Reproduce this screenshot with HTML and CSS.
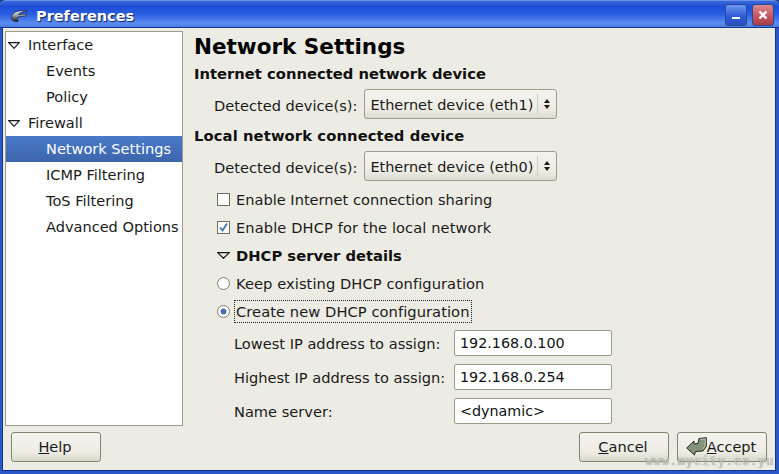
FILE: index.html
```html
<!DOCTYPE html>
<html lang="en">
<head>
  <meta charset="UTF-8">
  <title>Preferences</title>
  <link rel="stylesheet" href="styles.css">
</head>
<body>
  <div class="window">
    <div class="titlebar">
      <svg class="app-icon" viewBox="0 0 17 12">
        <defs>
          <linearGradient id="flame" x1="0" y1="0" x2="0" y2="1">
            <stop offset="0" stop-color="#f2f2f2"/>
            <stop offset="0.45" stop-color="#9a9ca4"/>
            <stop offset="1" stop-color="#15161c"/>
          </linearGradient>
        </defs>
        <path d="M0.5 8C0.5 3 6 -0.5 16.5 1 11 1.5 8.5 2.5 7.5 4.5L15.5 4 14.5 6 7 7C6 8.5 6.5 10 7 11.5 3 11.5 0.5 10.5 0.5 8Z" fill="url(#flame)" stroke="#1a1c26" stroke-width="0.6"/>
      </svg>
      <span class="title">Preferences</span>
      <div class="wm-btn minimize"><span></span></div>
      <div class="wm-btn close">
        <svg viewBox="0 0 10 10"><path d="M1.5 1.5L8.5 8.5M8.5 1.5L1.5 8.5" stroke="#fff" stroke-width="2.4"/></svg>
      </div>
    </div>

    <div class="content">
      <div class="main">
        <div class="tree">
          <div class="tree-row"><svg class="expander" viewBox="0 0 12 7"><path d="M0.7 0.7H11.3L6 6.3Z"/></svg>Interface</div>
          <div class="tree-row child">Events</div>
          <div class="tree-row child">Policy</div>
          <div class="tree-row"><svg class="expander" viewBox="0 0 12 7"><path d="M0.7 0.7H11.3L6 6.3Z"/></svg>Firewall</div>
          <div class="tree-row child selected">Network Settings</div>
          <div class="tree-row child">ICMP Filtering</div>
          <div class="tree-row child">ToS Filtering</div>
          <div class="tree-row child">Advanced Options</div>
        </div>

        <div class="panel">
          <h1>Network Settings</h1>
          <div class="section">Internet connected network device</div>
          <div class="device-row">
            <span>Detected device(s):</span>
            <div class="combo">
              <span class="combo-text">Ethernet device (eth1)</span>
              <span class="combo-arrows"><b class="up"></b><b class="down"></b></span>
            </div>
          </div>
          <div class="section second">Local network connected device</div>
          <div class="device-row">
            <span>Detected device(s):</span>
            <div class="combo">
              <span class="combo-text">Ethernet device (eth0)</span>
              <span class="combo-arrows"><b class="up"></b><b class="down"></b></span>
            </div>
          </div>

          <div class="options">
            <div class="option"><i class="check"></i>Enable Internet connection sharing</div>
            <div class="option spaced">
              <i class="check">
                <svg viewBox="0 0 11 11"><path d="M2 5.5L4.5 8.5 9 1.5" fill="none" stroke="#4a6fb5" stroke-width="1.8"/></svg>
              </i>Enable DHCP for the local network
            </div>
            <div class="option strong"><svg class="expander big" viewBox="0 0 13 7"><path d="M0.7 0.7H12.3L6.5 6.3Z"/></svg>DHCP server details</div>
            <div class="option wide"><i class="radio"></i>Keep existing DHCP configuration</div>
            <div class="option wide"><i class="radio on"></i><span class="focused">Create new DHCP configuration</span></div>
          </div>

          <div class="fields">
            <label>Lowest IP address to assign:</label><div class="entry">192.168.0.100</div>
            <label>Highest IP address to assign:</label><div class="entry">192.168.0.254</div>
            <label>Name server:</label><div class="entry">&lt;dynamic&gt;</div>
          </div>
        </div>
      </div>

      <div class="buttons">
        <div class="btn"><span><u>H</u>elp</span></div>
        <div class="spacer"></div>
        <div class="btn"><span><u>C</u>ancel</span></div>
        <div class="btn accept">
          <svg viewBox="0 0 21 19">
            <path d="M0.7 11L8 4V7L12 6.5 13 1.5 20.3 0.7V9.5L17 14 9.5 14.5 8.5 18Z" fill="#83947a" stroke="#23281f" stroke-width="1"/>
            <path d="M14 2.5L19.3 1.8 19 9 17 12" fill="none" stroke="#b4c0ac" stroke-width="1"/>
          </svg>
          <span><u>A</u>ccept</span>
        </div>
      </div>
    </div>

    <div class="watermark">www.mycity.co.yu</div>
  </div>
</body>
</html>
```

FILE: styles.css
```css
html, body {
  margin: 0;
  padding: 0;
  height: 100%;
}

body {
  width: 779px;
  height: 474px;
  overflow: hidden;
  font-family: "DejaVu Sans", sans-serif;
  font-size: 14.55px;
  color: #1a1a1a;
  background: #1d3f8f;
}

.window {
  position: relative;
  display: flex;
  flex-direction: column;
  height: 474px;
  box-sizing: border-box;
  border-radius: 6px 6px 0 0;
  background: #2a58c8;
}

/* barra de titulo */
.titlebar {
  display: flex;
  align-items: center;
  flex: 0 0 28px;
  padding: 3px 5px 0 11px;
  border-top: 1px solid #6f93e4;
  border-bottom: 1px solid #12348a;
  box-sizing: border-box;
  background: linear-gradient(to bottom, #3a68dc 0%, #1d4ed6 22%, #2a5ce0 50%, #5a8cf0 85%, #4a7ce4 100%);
  border-radius: 6px 6px 0 0;
}

.app-icon {
  width: 17px;
  height: 12px;
  margin-right: 8px;
}

.title {
  flex: 1;
  color: #fff;
  font-weight: bold;
  font-size: 14.5px;
  text-shadow: 1px 1px 1px #10265e;
}

.wm-btn {
  display: flex;
  align-items: center;
  justify-content: center;
  width: 20px;
  height: 20px;
  margin-left: 5px;
  margin-top: -1px;
  border: 1px solid #2a4a94;
  border-radius: 3px;
}

.minimize {
  background: linear-gradient(to bottom, #6e97f0, #2c59d8 60%, #2a50b8);
}

.minimize span {
  width: 8px;
  height: 2px;
  margin-top: 5px;
  background: #fff;
}

.close {
  background: linear-gradient(to bottom, #dc8a8e, #c65058 60%, #a54048);
}

.close svg {
  width: 10px;
  height: 10px;
}

.content {
  display: flex;
  flex-direction: column;
  flex: 1;
  margin: 0 3px 3px 2px;
  border: 1px solid #12348a;
  border-top: none;
  background: #edece4;
  padding: 3px 0 0 2px;
  min-height: 0;
}

.main {
  display: flex;
  height: 395px;
}

/* arvore da esquerda */
.tree {
  width: 176px;
  background: #fff;
  border: 1px solid #9d9c8b;
}

.tree-row {
  display: flex;
  align-items: center;
  height: 26px;
  box-sizing: border-box;
  padding-left: 22px;
  padding-bottom: 1px;
  position: relative;
}

.tree-row.child {
  padding-left: 40px;
}

.tree-row.selected {
  color: #fff;
  background: linear-gradient(to bottom, #4a79c8, #3d65ac);
}

.expander {
  position: absolute;
  left: 2px;
  top: 10px;
  width: 12px;
  height: 7px;
  fill: none;
  stroke: #1a1a1a;
  stroke-width: 1.2;
}

.expander.big {
  position: static;
  flex: none;
  width: 13px;
  margin-right: 6px;
}

/* painel */
.panel {
  flex: 1;
  padding-left: 11px;
  font-size: 14.6px;
}

h1 {
  margin: 1px 0 0;
  height: 29px;
  line-height: 29px;
  font-size: 21.5px;
  font-weight: bold;
  color: #000;
}

.section {
  margin-top: 2px;
  height: 22px;
  line-height: 22px;
  font-size: 14.75px;
  font-weight: bold;
  color: #111;
}

.section.second {
  margin-top: 6px;
  letter-spacing: 0.1px;
}

.device-row {
  display: flex;
  align-items: center;
  gap: 7px;
  margin: 4px 0 0 20px;
}

.device-row > span {
  padding-top: 2px;
}

.combo {
  display: flex;
  align-items: center;
  height: 30px;
  box-sizing: border-box;
  padding: 0 6px 0 5px;
  border: 1px solid #9d9c8b;
  border-radius: 3px;
  background: linear-gradient(to bottom, #f4f3ee, #edece4 70%, #dcdbd0);
}

.combo-text {
  font-size: 14.45px;
  padding-top: 2px;
}

.combo-arrows {
  display: flex;
  flex-direction: column;
  align-items: center;
  gap: 2px;
  margin-left: 4px;
  padding-left: 6px;
  height: 20px;
  justify-content: center;
  border-left: 1px solid #cfcdc0;
}

.combo-arrows b {
  width: 0;
  height: 0;
  border-left: 3.5px solid transparent;
  border-right: 3.5px solid transparent;
}

.combo-arrows .up {
  border-bottom: 4px solid #1a1a1a;
}

.combo-arrows .down {
  border-top: 4px solid #1a1a1a;
}

.options {
  margin: 4px 0 0 23px;
}

.option {
  display: flex;
  align-items: center;
  height: 28px;
}

.option.spaced {
  letter-spacing: 0.12px;
}

.option.wide {
  font-size: 14.7px;
  letter-spacing: 0.05px;
}

.option.strong {
  font-size: 14.75px;
  font-weight: bold;
  color: #111;
}

.check {
  display: block;
  flex: none;
  width: 11px;
  height: 11px;
  margin-right: 6px;
  border: 1px solid #6f6e5f;
  background: #fff;
}

.check svg {
  display: block;
  width: 11px;
  height: 11px;
}

.radio {
  display: block;
  flex: none;
  box-sizing: border-box;
  width: 13px;
  height: 13px;
  margin-right: 6px;
  border: 1px solid #7d7c6c;
  border-radius: 50%;
  background: #fff;
}

.radio.on {
  background: radial-gradient(circle, #4a6fb5 0 2.6px, #fff 3.4px);
}

.focused {
  padding: 2px 1px;
  margin-left: -1px;
  outline: 1px dotted #222;
}

.fields {
  display: grid;
  grid-template-columns: 220px 158px;
  grid-auto-rows: 26px;
  row-gap: 8px;
  align-items: center;
  margin: 5px 0 0 40px;
}

.entry {
  height: 26px;
  line-height: 24px;
  font-size: 14.3px;
  box-sizing: border-box;
  padding-left: 5px;
  background: #fff;
  border: 1px solid #9d9c8b;
  border-radius: 2px;
  color: #111;
}

/* botoes de baixo */
.buttons {
  display: flex;
  gap: 8px;
  margin: 6px 8px 0 6px;
}

.spacer {
  flex: 1;
}

.btn {
  display: flex;
  align-items: center;
  justify-content: center;
  width: 90px;
  height: 30px;
  box-sizing: border-box;
  padding: 0 2px 1px 0;
  border: 1px solid #84836f;
  border-radius: 3px;
  background: linear-gradient(to bottom, #f4f3ee, #edece4 70%, #d8d7ca);
}

.accept svg {
  width: 21px;
  height: 19px;
}

.watermark {
  position: absolute;
  right: 5px;
  bottom: 6px;
  color: #d8d8d0;
  font-family: "DejaVu Sans Mono", monospace;
  font-size: 12px;
  letter-spacing: 0.8px;
  text-shadow: 0 0 1px #555;
}
```
